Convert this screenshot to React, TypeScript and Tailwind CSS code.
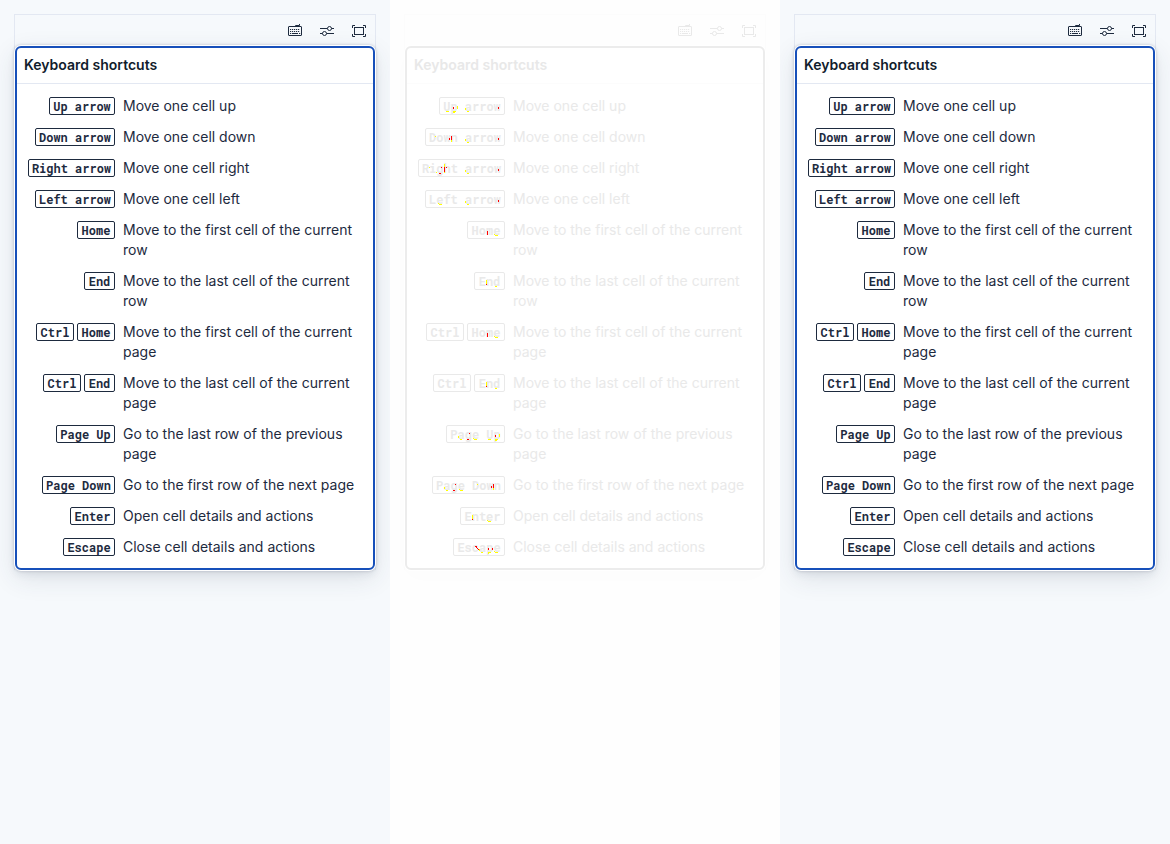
import clsx from 'clsx'

type Mark = [x: number, y: number, w: number, h: number, color: 'red' | 'yellow']

interface Shortcut {
  keys: string[]
  description: string
}

const SHORTCUTS: Shortcut[] = [
  { keys: ['Up arrow'], description: 'Move one cell up' },
  { keys: ['Down arrow'], description: 'Move one cell down' },
  { keys: ['Right arrow'], description: 'Move one cell right' },
  { keys: ['Left arrow'], description: 'Move one cell left' },
  { keys: ['Home'], description: 'Move to the first cell of the current row' },
  { keys: ['End'], description: 'Move to the last cell of the current row' },
  { keys: ['Ctrl', 'Home'], description: 'Move to the first cell of the current page' },
  { keys: ['Ctrl', 'End'], description: 'Move to the last cell of the current page' },
  { keys: ['Page Up'], description: 'Go to the last row of the previous page' },
  { keys: ['Page Down'], description: 'Go to the first row of the next page' },
  { keys: ['Enter'], description: 'Open cell details and actions' },
  { keys: ['Escape'], description: 'Close cell details and actions' },
]

const CHAR_WIDTH = 7
const KEY_PADDING = 5

// changed pixels, relative to the top left of the glyph's cell
const GLYPH_MARKS: Record<string, Mark[]> = {
  a: [[0, 11, 1, 2, 'yellow'], [2, 14, 2, 1, 'yellow']],
  c: [[3, 8, 2, 1, 'red'], [4, 9, 1, 1, 'red'], [5, 10, 1, 1, 'red'], [6, 11, 2, 1, 'red']],
  d: [[2, 14, 2, 1, 'yellow']],
  e: [[1, 13, 1, 1, 'yellow'], [2, 14, 3, 1, 'yellow']],
  g: [[4, 8, 1, 1, 'red'], [2, 14, 2, 1, 'red']],
  h: [[0, 5, 1, 3, 'yellow'], [0, 8, 1, 5, 'red'], [2, 8, 1, 1, 'red'], [0, 13, 1, 1, 'yellow']],
  i: [[6, 13, 1, 1, 'yellow']],
  m: [[1, 10, 1, 4, 'red']],
  n: [[0, 8, 1, 4, 'yellow'], [0, 12, 1, 1, 'red']],
  p: [[2, 10, 1, 2, 'red'], [6, 9, 1, 3, 'yellow'], [2, 14, 3, 1, 'yellow'], [2, 15, 2, 1, 'yellow']],
  D: [[5, 8, 1, 1, 'yellow']],
  R: [[6, 8, 1, 1, 'yellow']],
  U: [[2, 14, 3, 1, 'yellow']],
}

function getMarks(label: string): Mark[] {
  if (label === 'Ctrl') return []
  return label.split('').flatMap((char, i) => {
    let marks = GLYPH_MARKS[char] ?? []
    if (char === 'n' && label.includes('Down')) {
      marks = [[0, 8, 1, 4, 'red'], [0, 12, 1, 2, 'yellow']]
    }
    if (char === 'p' && label === 'Escape') {
      marks = [[2, 10, 1, 2, 'red'], [6, 10, 1, 2, 'red'], [2, 14, 3, 1, 'yellow'], [2, 15, 1, 1, 'yellow']]
    }
    if (char === 'w') {
      marks = [[5, 10, 1, 2, 'red']]
    }
    return marks.map(([x, y, w, h, color]): Mark => [x + KEY_PADDING + i * CHAR_WIDTH, y, w, h, color])
  })
}

function KeyboardIcon() {
  return (
    <svg width="16" height="16" viewBox="0 0 16 16" fill="none" stroke="currentColor">
      <rect x="1.5" y="3.5" width="13" height="9" rx="0.5" />
      <path d="M8.5 3.5v-1h4v-1.5" />
      <path d="M3 6.5h10M3 8.5h10" strokeDasharray="1.2 0.8" />
      <path d="M3 10.5h1.2M5 10.5h6M12 10.5h1.2" />
    </svg>
  )
}

function ControlsIcon() {
  return (
    <svg width="16" height="16" viewBox="0 0 16 16" fill="none" stroke="currentColor">
      <path d="M1 5.5h7.5M12.5 5.5H15M1 10.5h2.5M7.5 10.5H15" />
      <circle cx="10.5" cy="5.5" r="2" />
      <circle cx="5.5" cy="10.5" r="2" />
    </svg>
  )
}

function FullScreenIcon() {
  return (
    <svg width="16" height="16" viewBox="0 0 16 16" fill="none" stroke="currentColor">
      <rect x="3.5" y="4.5" width="9" height="7" />
      <path d="M1.5 5V2.5H4M12 2.5h2.5V5M14.5 11v2.5H12M4 13.5H1.5V11" />
    </svg>
  )
}

function Key({ label, diff }: { label: string; diff?: boolean }) {
  const width = label.length * CHAR_WIDTH + KEY_PADDING * 2

  return (
    <kbd
      className={clsx(
        'relative flex h-[18px] shrink-0 justify-center whitespace-pre rounded-xs border font-["Roboto_Mono","Liberation_Mono",monospace] text-xs font-bold leading-4',
        diff ? 'border-[#e9e9e9] text-[#e9e9e9]' : 'border-[#1d2a3e] text-[#1d2a3e]'
      )}
      style={{ width }}
    >
      {label}
      {diff && (
        <svg className="absolute -left-px -top-px" width={width} height="18" shapeRendering="crispEdges">
          {getMarks(label).map(([x, y, w, h, color], i) => (
            <rect key={i} x={x} y={y} width={w} height={h} fill={color} />
          ))}
        </svg>
      )}
    </kbd>
  )
}

function ShortcutsPanel({ diff }: { diff?: boolean }) {
  return (
    <section className={clsx('min-w-0 flex-1 overflow-hidden p-3.5', diff ? 'bg-[#fefefe]' : 'bg-[#f6f9fc]')}>
      <div className={clsx('border border-b-0', diff ? 'border-[#fcfcfc]' : 'border-[#e3e8f2]')}>
        <div
          className={clsx(
            'flex items-start justify-end gap-4 px-2 pb-[7px] pt-2',
            diff ? 'text-[#e9e9e9]' : 'text-[#1d2a3e]'
          )}
        >
          <button type="button" aria-label="Keyboard shortcuts"><KeyboardIcon /></button>
          <button type="button" aria-label="Display options"><ControlsIcon /></button>
          <button type="button" aria-label="Enter fullscreen"><FullScreenIcon /></button>
        </div>

        <div
          className={clsx(
            'rounded-md border-2 bg-white',
            diff
              ? 'border-[#ececec] shadow-[0_0_0_1px_#ffffff,0_6px_24px_#00000003]'
              : 'border-[#1750ba] shadow-[0_0_0_1px_#ffffff,0_0_3px_1px_#2b394f40,0_4px_9px_#2b394f14,0_8px_26px_#2b394f1f]'
          )}
        >
          <h2
            className={clsx(
              'border-b px-[7px] pb-2 pt-[7px] text-sm font-semibold leading-5',
              diff ? 'border-[#fcfcfc] text-[#e8e8e8]' : 'border-[#e3e8f2] text-[#111c2c]'
            )}
          >
            Keyboard shortcuts
          </h2>
          <dl
            className={clsx(
              'grid grid-cols-[87px_1fr] gap-x-2 gap-y-[11px] px-[11px] pb-[11px] pt-3 text-sm leading-5',
              diff ? 'text-[#e9e9e9]' : 'text-[#1d2a3e]'
            )}
          >
            {SHORTCUTS.map(({ keys, description }) => (
              <div key={description} className="contents">
                <dt className="flex items-start justify-end gap-[3px] pt-px">
                  {keys.map((key) => <Key key={key} label={key} diff={diff} />)}
                </dt>
                <dd>{description}</dd>
              </div>
            ))}
          </dl>
        </div>
      </div>
    </section>
  )
}

export default function App() {
  return (
    <main className="flex min-h-screen bg-white font-[Inter,sans-serif]">
      <ShortcutsPanel />
      <ShortcutsPanel diff />
      <ShortcutsPanel />
    </main>
  )
}
